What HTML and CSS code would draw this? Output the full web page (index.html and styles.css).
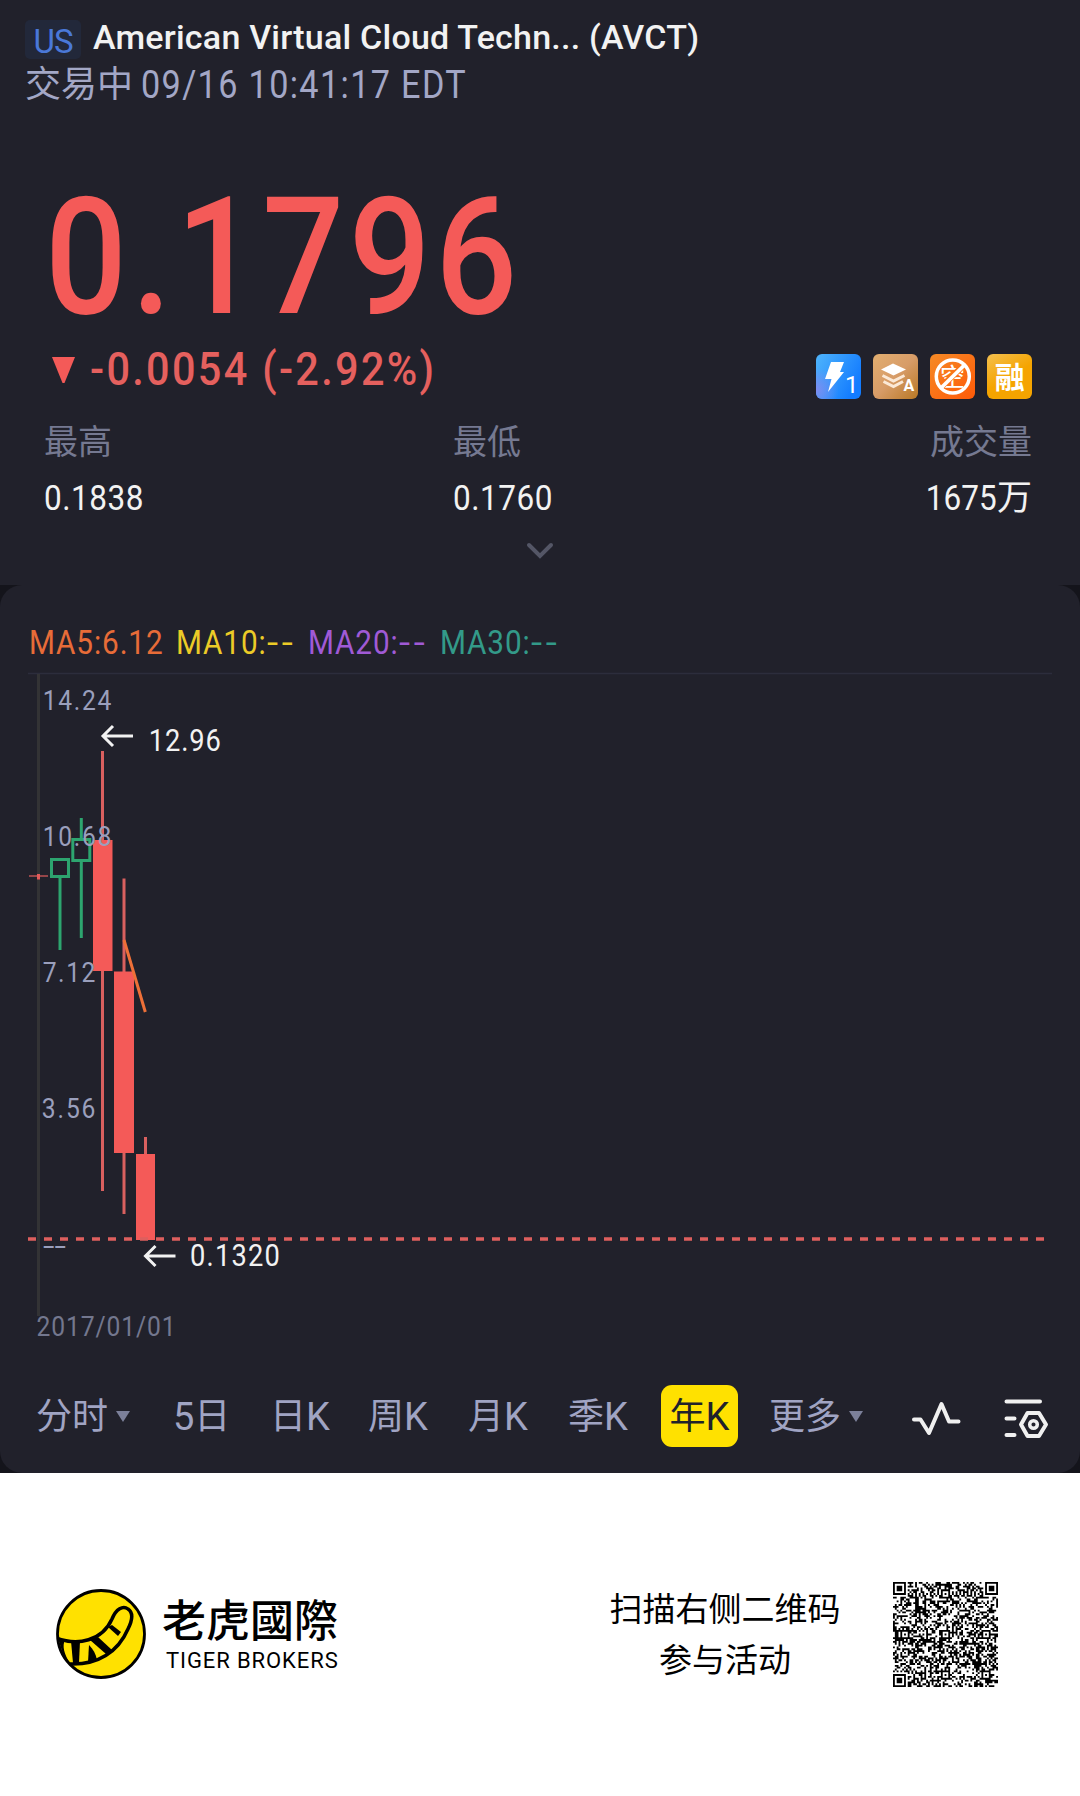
FILE: index.html
```html
<!DOCTYPE html>
<html lang="zh-CN">
<head>
  <meta charset="UTF-8">
  <title>AVCT - 老虎國際</title>
  <meta name="viewport" content="width=device-width, initial-scale=1">
  <link rel="stylesheet" href="styles.css">
</head>
<body>
  <header class="quote">
    <div class="title-row">
      <span class="market">US</span>
      <h1>American Virtual Cloud Techn... (AVCT)</h1>
    </div>
    <div class="status">
      <span>交易中</span>
      <span class="num time">09/16 10:41:17 EDT</span>
    </div>

    <div class="price">0.1796</div>

    <div class="change-row">
      <svg class="down" width="23" height="27" viewBox="0 0 23 27"><path d="M0 0H23L12.500 26H10.500Z" fill="#f45a58"/></svg>
      <span class="change">-0.0054 (-2.92%)</span>
      <div class="badges">
        <svg width="45" height="45" viewBox="0 0 45 45">
          <defs>
            <linearGradient id="blue" x1="0" y1="0" x2="1" y2=".5"><stop offset="0" stop-color="#4fb4fb"/><stop offset="1" stop-color="#137cff"/></linearGradient>
            <radialGradient id="violet" cx="0" cy=".8" r=".5"><stop offset="0" stop-color="#7c8cf0"/><stop offset="1" stop-color="#7c8cf0" stop-opacity="0"/></radialGradient>
          </defs>
          <rect width="45" height="45" rx="6" fill="url(#blue)"/>
          <rect width="45" height="45" rx="6" fill="url(#violet)"/>
          <path d="M15 8H28L24 18H28L12 38L15.500 25H9Z" fill="#fff"/>
          <text x="29" y="39" class="badge-one">1</text>
        </svg>
        <svg width="45" height="45" viewBox="0 0 45 45">
          <defs><linearGradient id="tan" x1="0" y1="0" x2="1" y2="1"><stop offset="0" stop-color="#e2ae70"/><stop offset=".5" stop-color="#d79c68"/><stop offset="1" stop-color="#b87824"/></linearGradient></defs>
          <rect width="45" height="45" rx="6" fill="url(#tan)"/>
          <path d="M8 15.500L20 9.500L33 15.500L20.500 21.500Z" fill="#fff"/>
          <path d="M9.500 21.500L20.500 27L31.500 21.500M10.500 27.500L20.500 32.500L30 27.500" fill="none" stroke="#fbe9d6" stroke-width="3"/>
          <text x="30.500" y="37" class="badge-a">A</text>
        </svg>
        <svg width="45" height="45" viewBox="0 0 45 45">
          <defs><linearGradient id="orange" x1="0" y1="0" x2="1" y2="1"><stop offset="0" stop-color="#f58a26"/><stop offset="1" stop-color="#ff5a08"/></linearGradient></defs>
          <rect width="45" height="45" rx="6" fill="url(#orange)"/>
          <text x="22.500" y="32" class="badge-short">空</text>
          <path d="M11 33L34 11" stroke="#f97518" stroke-width="6"/>
          <circle cx="22.800" cy="22.500" r="16.500" fill="none" stroke="#fff" stroke-width="3.500"/>
          <path d="M11 34L34.500 11" stroke="#fff" stroke-width="3.800"/>
        </svg>
        <svg width="45" height="45" viewBox="0 0 45 45">
          <defs><linearGradient id="gold" x1="0" y1="0" x2=".6" y2="1"><stop offset="0" stop-color="#f4c050"/><stop offset=".6" stop-color="#f5a400"/><stop offset="1" stop-color="#f5a400"/></linearGradient></defs>
          <rect width="45" height="45" rx="6" fill="url(#gold)"/>
          <text x="22.800" y="33.500" class="badge-margin">融</text>
        </svg>
      </div>
    </div>

    <div class="stats">
      <div>
        <div class="label">最高</div>
        <div class="value">0.1838</div>
      </div>
      <div>
        <div class="label">最低</div>
        <div class="value">0.1760</div>
      </div>
      <div class="right">
        <div class="label">成交量</div>
        <div class="value"><span class="num">1675</span>万</div>
      </div>
    </div>

    <svg class="chevron" width="28" height="19" viewBox="0 0 28 19"><path d="M3 4L14 15L25 4" fill="none" stroke="#545666" stroke-width="4" stroke-linecap="round"/></svg>
  </header>

  <main>
    <section class="card">
      <div class="legend">
        <span class="ma5">MA5:6.12</span>
        <span class="ma10">MA10:<i>--</i></span>
        <span class="ma20">MA20:<i>--</i></span>
        <span class="ma30">MA30:<i>--</i></span>
      </div>

      <svg class="chart" width="1080" height="690" viewBox="0 0 1080 690">
        <path d="M28 10.500H1052" stroke="#2c2d3c" stroke-width="1.500"/>
        <path d="M38.500 11V653" stroke="#333335" stroke-width="3"/>

        <!-- yearly candles -->
        <path d="M29 213H48" stroke="#bd5254" stroke-width="1.500"/>
        <path d="M38.500 211V216.500" stroke="#e25b5a" stroke-width="3"/>
        <g fill="none" stroke="#2da56f" stroke-width="3">
          <rect x="51.500" y="196.500" width="17" height="17"/>
          <path d="M60 215V287"/>
          <rect x="72.800" y="176.500" width="17" height="21"/>
          <path d="M81.300 155V176M81.300 199V275"/>
        </g>
        <path d="M102.500 88V528M124 215.500V551M145.500 474V492" stroke="#d9605f" stroke-width="3"/>
        <g fill="#f45a58">
          <rect x="93" y="177" width="19.500" height="131"/>
          <rect x="114" y="308.500" width="20" height="181.500"/>
          <rect x="136" y="491" width="19" height="86"/>
        </g>
        <path d="M124 277L145.300 349" stroke="#ee7038" stroke-width="3"/>
        <path d="M28 576H1046" stroke="#dd5f5e" stroke-width="3.500" stroke-dasharray="8 8"/>

        <!-- texts are condensed by .88, x values are divided by it -->
        <g transform="scale(.88 1)">
          <g class="axis">
            <text x="48.500" y="47" textLength="78">14.24</text>
            <text x="48.500" y="183" textLength="78">10.68</text>
            <text x="48.500" y="319" textLength="60">7.12</text>
            <text x="47.500" y="455" textLength="61">3.56</text>
            <text x="49" y="592" textLength="26" lengthAdjust="spacingAndGlyphs">--</text>
          </g>
          <text x="41.500" y="673" textLength="158" class="date">2017/01/01</text>
          <g class="mark">
            <text x="169" y="88" textLength="82">12.96</text>
            <text x="216" y="603" textLength="102">0.1320</text>
          </g>
        </g>

        <!-- high / low arrows -->
        <g fill="none" stroke="#f2f2f2" stroke-width="3">
          <path d="M133 73H103M113 63L103 73L113 83"/>
          <path d="M175.500 593H145.500M155.500 583L145.500 593L155.500 603"/>
        </g>
      </svg>

      <nav class="tabs">
        <span>分时<b class="caret"></b></span>
        <span><em>5</em>日</span>
        <span>日<em>K</em></span>
        <span>周<em>K</em></span>
        <span>月<em>K</em></span>
        <span>季<em>K</em></span>
        <span class="active">年<em>K</em></span>
        <span>更多<b class="caret"></b></span>
        <svg width="50" height="40" viewBox="0 0 50 40"><path d="M2 21.500H8.500L17 35L29.500 6L37 23.500H46.500" fill="none" stroke="#f0f0f0" stroke-width="4" stroke-linecap="round" stroke-linejoin="round"/></svg>
        <svg width="46" height="42" viewBox="0 0 46 42">
          <g fill="none" stroke="#f0f0f0" stroke-width="4" stroke-linecap="round" stroke-linejoin="round">
            <path d="M2.500 4.500H36M2.500 21.500H10.500M2.500 38H10.500"/>
            <path d="M23.500 16H35L42 27.500L35 39H23.500L17 27.500Z"/>
            <circle cx="29.500" cy="27.500" r="3.800" stroke-width="3.500"/>
          </g>
        </svg>
      </nav>
    </section>
  </main>

  <footer>
    <svg class="logo" width="90" height="90" viewBox="0 0 90 90">
      <defs><clipPath id="coin"><circle cx="45" cy="45" r="43.500"/></clipPath></defs>
      <circle cx="45" cy="45" r="43.500" fill="#ffe100"/>
      <g clip-path="url(#coin)">
        <path d="M0 49C22 57 46 52 56 30C60 20 67 16 72 20C78 24 76 32 72 40C62 63 42 76 14 75" fill="none" stroke="#000" stroke-width="3.500"/>
        <path d="M2 49L9 51C6 57 8 64 14 75L9 72Z"/>
        <path d="M15 52H24L23 74H17Z"/>
        <path d="M33 56C37 60 40 65 41 71L32 73Z"/>
        <path d="M34 51L42 48L56 61L50 65Z"/>
        <path d="M52 38L56 36L65 43L62 47Z"/>
      </g>
      <circle cx="45" cy="45" r="43.500" fill="none" stroke="#000" stroke-width="2.800"/>
    </svg>
    <div class="brand">
      <div class="brand-cn">老虎國際</div>
      <div class="brand-en">TIGER BROKERS</div>
    </div>
    <p>扫描右侧二维码<br>参与活动</p>
    <svg class="qr" id="qr" width="105" height="105" viewBox="0 0 57 57"></svg>
  </footer>

  <script src="qr.js"></script>
</body>
</html>
```
FILE: styles.css
```css
* {
  box-sizing: border-box;
}

body {
  margin: 0;
  width: 1080px;
  background: #fff;
  font-family: Roboto, "Noto Sans CJK SC", sans-serif;
  color: #f2f2f2;
}

svg {
  display: block;
  flex-shrink: 0;
}

.num {
  display: inline-block;
  transform: scaleX(.9);
  transform-origin: left;
  letter-spacing: 0;
}

/* quote header */
.quote {
  height: 585px;
  padding-top: 20px;
  background: #21212b;
}

.title-row {
  display: flex;
  align-items: flex-start;
  gap: 12px;
  height: 39px;
  padding-left: 25px;
}

.market {
  width: 56px;
  height: 39px;
  line-height: 43px;
  border-radius: 5px;
  background: #22283a;
  color: #4a78d8;
  font-size: 33px;
  text-align: center;
  letter-spacing: -1px;
}

h1 {
  margin: 0;
  font-size: 34px;
  font-weight: 500;
  line-height: 34px;
  letter-spacing: .22px;
  white-space: nowrap;
}

.status {
  display: flex;
  gap: 8px;
  margin-top: 4px;
  padding-left: 25px;
  font-size: 36px;
  line-height: 44px;
  color: #a3a7c6;
}

.time {
  font-size: 38px;
  letter-spacing: 1.5px;
}

.price {
  margin-top: 65px;
  padding-left: 45px;
  font-size: 164px;
  font-weight: 500;
  line-height: 170px;
  letter-spacing: 5px;
  color: #f45a58;
  transform: scaleX(.88);
  transform-origin: 45px 0;
}

.change-row {
  display: flex;
  align-items: flex-start;
  height: 45px;
  margin-top: 12px;
  padding: 0 48px 0 52px;
}

.down {
  margin-top: 3px;
}

.change {
  margin-left: 15px;
  font-size: 46px;
  font-weight: 500;
  line-height: 31px;
  letter-spacing: 2.6px;
  white-space: nowrap;
  color: #e5605e;
  transform: scaleX(.9);
  transform-origin: left;
}

.badges {
  display: flex;
  gap: 12px;
  margin-left: auto;
}

.badges text {
  fill: #fff;
}

.badge-one {
  font-size: 24px;
}

.badge-a {
  font-size: 16px;
  font-weight: 700;
}

.badge-short {
  font-size: 25px;
  text-anchor: middle;
}

.badge-margin {
  font-size: 30px;
  font-weight: 700;
  text-anchor: middle;
}

.stats {
  display: grid;
  grid-template-columns: 409px 1fr 1fr;
  margin-top: 23px;
  padding: 0 48px 0 44px;
}

.label {
  font-size: 34px;
  line-height: 40px;
  color: #757991;
}

.value {
  margin-top: 17px;
  font-size: 35px;
  line-height: 40px;
  letter-spacing: .6px;
  transform: scaleX(.9);
  transform-origin: left;
}

.right {
  text-align: right;
}

.right .value {
  transform: none;
  letter-spacing: 0;
}

.right .num {
  transform-origin: right;
}

.chevron {
  margin: 22px auto 0;
}

/* chart card */
main {
  background: #14141b;
}

.card {
  height: 888px;
  padding-top: 38px;
  border-radius: 22px;
  background: #21212b;
}

.legend {
  display: grid;
  grid-template-columns: 147px 132px 132px 132px;
  padding-left: 29px;
  font-size: 33px;
  line-height: 40px;
}

.legend span {
  letter-spacing: 1px;
  white-space: nowrap;
  transform: scaleX(.9);
  transform-origin: left;
}

.legend i {
  display: inline-block;
  font-style: normal;
  letter-spacing: 3px;
  transform: scaleX(1.35);
  transform-origin: left;
}

.ma5 {
  color: #e86c38;
}

.ma10 {
  color: #eccb27;
}

.ma20 {
  color: #a05ad6;
}

.ma30 {
  color: #339a89;
}

.axis {
  font-size: 28px;
  fill: #9a9fbc;
}

.date {
  font-size: 28px;
  fill: #73778e;
}

.mark {
  font-size: 31px;
  fill: #f2f2f2;
}

.tabs {
  display: grid;
  grid-template-columns: 137px 97px 98px 100px 100px 92px 109px 143px 92px 46px;
  align-items: center;
  height: 62px;
  margin-top: 32px;
  padding-left: 36px;
  font-size: 36px;
  line-height: 62px;
  color: #a0a4c3;
}

.tabs span {
  display: flex;
  align-items: center;
  height: 62px;
  padding-top: 1px;
}

.tabs svg {
  margin-top: 4px;
}

.tabs em {
  font-style: normal;
  font-size: 38px;
}

.tabs .active {
  justify-content: center;
  width: 77px;
  margin-left: 1px;
  border-radius: 11px;
  background: #ffe100;
  color: #21212b;
}

.caret {
  margin-left: 8px;
  border: 7px solid transparent;
  border-top: 11px solid #7c809a;
  border-bottom: 0;
}

/* share footer */
footer {
  display: flex;
  align-items: center;
  height: 323px;
  padding-left: 56px;
  background: #fff;
  color: #000;
}

.logo {
  margin-top: -1px;
}

.brand {
  width: 200px;
  margin-left: 16px;
}

.brand-cn {
  font-family: "Noto Sans CJK TC", sans-serif;
  font-size: 44px;
  font-weight: 500;
  line-height: 48px;
}

.brand-en {
  margin-top: 5px;
  padding-left: 4px;
  font-size: 22px;
  line-height: 28px;
  letter-spacing: .9px;
  white-space: nowrap;
}

footer p {
  width: 240px;
  margin: 0 0 0 243px;
  font-size: 33px;
  line-height: 51px;
  text-align: center;
}

.qr {
  margin-left: 48px;
}
```
FILE: qr.js
```js
const svg = document.getElementById("qr");
const size = 57;
const align = [6, 28, 50];
let seed = 20220916;

function rand() {
  seed = (seed * 1103515245 + 12345) % 2147483648;
  return seed / 2147483648;
}

// square ring pattern around a centre, null when outside
function ring(x, y, cx, cy, r) {
  const d = Math.max(Math.abs(x - cx), Math.abs(y - cy));
  if (d > r) return null;
  return r === 4 ? d < 2 || d === 3 : d !== 1;
}

function moduleAt(x, y) {
  for (const [cx, cy] of [[3, 3], [53, 3], [3, 53]]) {
    const v = ring(x, y, cx, cy, 4);
    if (v !== null) return v;
  }
  for (const cx of align) {
    for (const cy of align) {
      const corner = (cx === 6 && cy !== 28) || (cy === 6 && cx === 50);
      if (corner) continue;
      const v = ring(x, y, cx, cy, 2);
      if (v !== null) return v;
    }
  }
  if (x === 6 || y === 6) return (x + y) % 2 === 0;
  return rand() < 0.5;
}

let d = "";
for (let y = 0; y < size; y++) {
  for (let x = 0; x < size; x++) {
    if (moduleAt(x, y)) d += `M${x} ${y}h1v1h-1z`;
  }
}

const path = document.createElementNS("http://www.w3.org/2000/svg", "path");
path.setAttribute("d", d);
svg.appendChild(path);
```
